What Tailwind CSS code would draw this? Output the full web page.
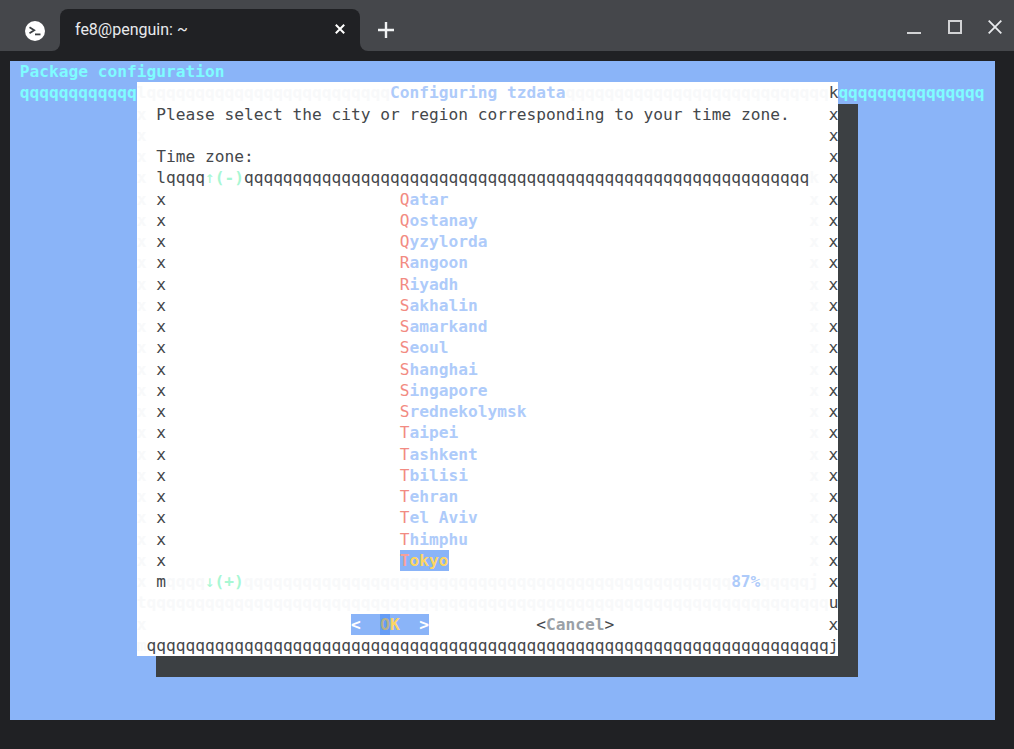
<!doctype html>
<html><head><meta charset="utf-8"><script src="https://cdn.jsdelivr.net/npm/@tailwindcss/browser@4"></script></head>
<body class="m-0 h-[749px] w-[1014px] overflow-hidden bg-[#202124]">
<header class="flex h-[51px] bg-[#202124]">
  <div class="flex h-[51px] w-[60px] items-center rounded-br-lg bg-[#45474b] pl-[25px]">
    <svg width="20" height="20" viewBox="0 0 20 20" class="mt-[10px]"><circle cx="10" cy="10" r="10" fill="#fff"/><path d="M4.5 6.2 9.2 9.2 4.5 12.2" fill="none" stroke="#3c4043" stroke-width="1.8"/><path d="M10 13.4h5.5" stroke="#3c4043" stroke-width="1.8"/></svg>
  </div>
  <div class="flex h-[51px] w-[300px] items-end bg-[#45474b]">
    <div class="flex h-[42px] w-full items-center justify-between rounded-t-lg bg-[#202124] pl-[15px] pr-[15px]">
      <span class="text-[16px] text-[#e8eaed]" style="font-family:Roboto,sans-serif">fe8@penguin: ~</span>
      <svg width="10" height="10" viewBox="0 0 10 10" class="mb-[2px]"><path d="M.8.8l8.4 8.4M9.2.8.8 9.2" stroke="#fff" stroke-width="2"/></svg>
    </div>
  </div>
  <div class="flex h-[51px] flex-1 items-center rounded-bl-lg bg-[#45474b] pt-[8px]">
    <svg width="16" height="16" viewBox="0 0 16 16" class="ml-[18px]"><path d="M8 0v16M0 8h16" stroke="#f1f3f4" stroke-width="2.4"/></svg>
    <svg width="14" height="14" viewBox="0 0 14 14" class="ml-[513px] mb-[6px]"><path d="M0 13h14" stroke="#d2d3d5" stroke-width="2"/></svg>
    <svg width="14" height="14" viewBox="0 0 14 14" class="ml-[27px] mb-[6px]"><rect x="1" y="1" width="12" height="12" fill="none" stroke="#d2d3d5" stroke-width="2"/></svg>
    <svg width="14" height="14" viewBox="0 0 14 14" class="ml-[26px] mb-[6px]"><path d="M.7.7l12.6 12.6M13.3.7.7 13.3" stroke="#e8eaed" stroke-width="1.8"/></svg>
  </div>
</header>
<main class="pl-[10px] pt-[10px]">
<div class="flex h-[659px] w-[985px] flex-col bg-[#8ab4f8] text-[16.2px] leading-[21.26px] whitespace-pre text-[#44474b]" style="font-family:'DejaVu Sans Mono',monospace">
  <div class="h-[21.26px] font-bold text-[#7ffcff]"> Package configuration</div>
  <div class="flex h-[21.26px]">
    <div class="w-[13ch] font-bold text-[#7ffcff]"> qqqqqqqqqqqq</div>
    <div class="flex w-[72ch] bg-white"><b class="text-[#f8f9fa]">lqqqqqqqqqqqqqqqqqqqqqqqqq</b><b class="text-[#aecbfa]">Configuring tzdata</b><b class="text-[#f8f9fa]">qqqqqqqqqqqqqqqqqqqqqqqqqqq</b><span>k</span></div>
    <div class="font-bold text-[#7ffcff]">qqqqqqqqqqqqqqq</div>
  </div>
  <div class="flex h-[21.26px] pl-[13ch]"><div class="flex w-[72ch] bg-white"><b class="w-[2ch] text-[#f8f9fa]">x</b><span class="w-[69ch]">Please select the city or region corresponding to your time zone.</span><span>x</span></div><div class="w-[2ch] bg-[#3c4043]"></div></div>
  <div class="flex h-[21.26px] pl-[13ch]"><div class="flex w-[72ch] bg-white"><b class="w-[2ch] text-[#f8f9fa]">x</b><span class="w-[69ch]"></span><span>x</span></div><div class="w-[2ch] bg-[#3c4043]"></div></div>
  <div class="flex h-[21.26px] pl-[13ch]"><div class="flex w-[72ch] bg-white"><b class="w-[2ch] text-[#f8f9fa]">x</b><span class="w-[69ch]">Time zone:</span><span>x</span></div><div class="w-[2ch] bg-[#3c4043]"></div></div>
  <div class="flex h-[21.26px] pl-[13ch]"><div class="flex w-[72ch] bg-white"><b class="w-[2ch] text-[#f8f9fa]">x</b><span>lqqqq</span><span class="w-[1ch] shrink-0 overflow-hidden text-[#a8f7d4]">↑</span><b class="text-[#a8f7d4]">(-)</b><span class="w-[58ch]">qqqqqqqqqqqqqqqqqqqqqqqqqqqqqqqqqqqqqqqqqqqqqqqqqqqqqqqqqq</span><b class="w-[2ch] text-[#f8f9fa]">k</b><span>x</span></div><div class="w-[2ch] bg-[#3c4043]"></div></div>
  <div class="flex h-[21.26px] pl-[13ch]"><div class="flex w-[72ch] bg-white"><b class="w-[2ch] text-[#f8f9fa]">x</b><span class="w-[25ch]">x</span><span class="w-[42ch]"><span class="text-[#f28b82]">Q</span><b class="text-[#aecbfa]">atar</b></span><b class="w-[2ch] text-[#f8f9fa]">x</b><span>x</span></div><div class="w-[2ch] bg-[#3c4043]"></div></div>
  <div class="flex h-[21.26px] pl-[13ch]"><div class="flex w-[72ch] bg-white"><b class="w-[2ch] text-[#f8f9fa]">x</b><span class="w-[25ch]">x</span><span class="w-[42ch]"><span class="text-[#f28b82]">Q</span><b class="text-[#aecbfa]">ostanay</b></span><b class="w-[2ch] text-[#f8f9fa]">x</b><span>x</span></div><div class="w-[2ch] bg-[#3c4043]"></div></div>
  <div class="flex h-[21.26px] pl-[13ch]"><div class="flex w-[72ch] bg-white"><b class="w-[2ch] text-[#f8f9fa]">x</b><span class="w-[25ch]">x</span><span class="w-[42ch]"><span class="text-[#f28b82]">Q</span><b class="text-[#aecbfa]">yzylorda</b></span><b class="w-[2ch] text-[#f8f9fa]">x</b><span>x</span></div><div class="w-[2ch] bg-[#3c4043]"></div></div>
  <div class="flex h-[21.26px] pl-[13ch]"><div class="flex w-[72ch] bg-white"><b class="w-[2ch] text-[#f8f9fa]">x</b><span class="w-[25ch]">x</span><span class="w-[42ch]"><span class="text-[#f28b82]">R</span><b class="text-[#aecbfa]">angoon</b></span><b class="w-[2ch] text-[#f8f9fa]">x</b><span>x</span></div><div class="w-[2ch] bg-[#3c4043]"></div></div>
  <div class="flex h-[21.26px] pl-[13ch]"><div class="flex w-[72ch] bg-white"><b class="w-[2ch] text-[#f8f9fa]">x</b><span class="w-[25ch]">x</span><span class="w-[42ch]"><span class="text-[#f28b82]">R</span><b class="text-[#aecbfa]">iyadh</b></span><b class="w-[2ch] text-[#f8f9fa]">x</b><span>x</span></div><div class="w-[2ch] bg-[#3c4043]"></div></div>
  <div class="flex h-[21.26px] pl-[13ch]"><div class="flex w-[72ch] bg-white"><b class="w-[2ch] text-[#f8f9fa]">x</b><span class="w-[25ch]">x</span><span class="w-[42ch]"><span class="text-[#f28b82]">S</span><b class="text-[#aecbfa]">akhalin</b></span><b class="w-[2ch] text-[#f8f9fa]">x</b><span>x</span></div><div class="w-[2ch] bg-[#3c4043]"></div></div>
  <div class="flex h-[21.26px] pl-[13ch]"><div class="flex w-[72ch] bg-white"><b class="w-[2ch] text-[#f8f9fa]">x</b><span class="w-[25ch]">x</span><span class="w-[42ch]"><span class="text-[#f28b82]">S</span><b class="text-[#aecbfa]">amarkand</b></span><b class="w-[2ch] text-[#f8f9fa]">x</b><span>x</span></div><div class="w-[2ch] bg-[#3c4043]"></div></div>
  <div class="flex h-[21.26px] pl-[13ch]"><div class="flex w-[72ch] bg-white"><b class="w-[2ch] text-[#f8f9fa]">x</b><span class="w-[25ch]">x</span><span class="w-[42ch]"><span class="text-[#f28b82]">S</span><b class="text-[#aecbfa]">eoul</b></span><b class="w-[2ch] text-[#f8f9fa]">x</b><span>x</span></div><div class="w-[2ch] bg-[#3c4043]"></div></div>
  <div class="flex h-[21.26px] pl-[13ch]"><div class="flex w-[72ch] bg-white"><b class="w-[2ch] text-[#f8f9fa]">x</b><span class="w-[25ch]">x</span><span class="w-[42ch]"><span class="text-[#f28b82]">S</span><b class="text-[#aecbfa]">hanghai</b></span><b class="w-[2ch] text-[#f8f9fa]">x</b><span>x</span></div><div class="w-[2ch] bg-[#3c4043]"></div></div>
  <div class="flex h-[21.26px] pl-[13ch]"><div class="flex w-[72ch] bg-white"><b class="w-[2ch] text-[#f8f9fa]">x</b><span class="w-[25ch]">x</span><span class="w-[42ch]"><span class="text-[#f28b82]">S</span><b class="text-[#aecbfa]">ingapore</b></span><b class="w-[2ch] text-[#f8f9fa]">x</b><span>x</span></div><div class="w-[2ch] bg-[#3c4043]"></div></div>
  <div class="flex h-[21.26px] pl-[13ch]"><div class="flex w-[72ch] bg-white"><b class="w-[2ch] text-[#f8f9fa]">x</b><span class="w-[25ch]">x</span><span class="w-[42ch]"><span class="text-[#f28b82]">S</span><b class="text-[#aecbfa]">rednekolymsk</b></span><b class="w-[2ch] text-[#f8f9fa]">x</b><span>x</span></div><div class="w-[2ch] bg-[#3c4043]"></div></div>
  <div class="flex h-[21.26px] pl-[13ch]"><div class="flex w-[72ch] bg-white"><b class="w-[2ch] text-[#f8f9fa]">x</b><span class="w-[25ch]">x</span><span class="w-[42ch]"><span class="text-[#f28b82]">T</span><b class="text-[#aecbfa]">aipei</b></span><b class="w-[2ch] text-[#f8f9fa]">x</b><span>x</span></div><div class="w-[2ch] bg-[#3c4043]"></div></div>
  <div class="flex h-[21.26px] pl-[13ch]"><div class="flex w-[72ch] bg-white"><b class="w-[2ch] text-[#f8f9fa]">x</b><span class="w-[25ch]">x</span><span class="w-[42ch]"><span class="text-[#f28b82]">T</span><b class="text-[#aecbfa]">ashkent</b></span><b class="w-[2ch] text-[#f8f9fa]">x</b><span>x</span></div><div class="w-[2ch] bg-[#3c4043]"></div></div>
  <div class="flex h-[21.26px] pl-[13ch]"><div class="flex w-[72ch] bg-white"><b class="w-[2ch] text-[#f8f9fa]">x</b><span class="w-[25ch]">x</span><span class="w-[42ch]"><span class="text-[#f28b82]">T</span><b class="text-[#aecbfa]">bilisi</b></span><b class="w-[2ch] text-[#f8f9fa]">x</b><span>x</span></div><div class="w-[2ch] bg-[#3c4043]"></div></div>
  <div class="flex h-[21.26px] pl-[13ch]"><div class="flex w-[72ch] bg-white"><b class="w-[2ch] text-[#f8f9fa]">x</b><span class="w-[25ch]">x</span><span class="w-[42ch]"><span class="text-[#f28b82]">T</span><b class="text-[#aecbfa]">ehran</b></span><b class="w-[2ch] text-[#f8f9fa]">x</b><span>x</span></div><div class="w-[2ch] bg-[#3c4043]"></div></div>
  <div class="flex h-[21.26px] pl-[13ch]"><div class="flex w-[72ch] bg-white"><b class="w-[2ch] text-[#f8f9fa]">x</b><span class="w-[25ch]">x</span><span class="w-[42ch]"><span class="text-[#f28b82]">T</span><b class="text-[#aecbfa]">el Aviv</b></span><b class="w-[2ch] text-[#f8f9fa]">x</b><span>x</span></div><div class="w-[2ch] bg-[#3c4043]"></div></div>
  <div class="flex h-[21.26px] pl-[13ch]"><div class="flex w-[72ch] bg-white"><b class="w-[2ch] text-[#f8f9fa]">x</b><span class="w-[25ch]">x</span><span class="w-[42ch]"><span class="text-[#f28b82]">T</span><b class="text-[#aecbfa]">himphu</b></span><b class="w-[2ch] text-[#f8f9fa]">x</b><span>x</span></div><div class="w-[2ch] bg-[#3c4043]"></div></div>
  <div class="flex h-[21.26px] pl-[13ch]"><div class="flex w-[72ch] bg-white"><b class="w-[2ch] text-[#f8f9fa]">x</b><span class="w-[25ch]">x</span><span class="w-[42ch]"><span class="inline-block h-[21.26px] bg-[#8ab4f8] align-top font-bold"><span class="text-[#f6a09a]">T</span><span class="text-[#fdd663]">okyo</span></span></span><b class="w-[2ch] text-[#f8f9fa]">x</b><span>x</span></div><div class="w-[2ch] bg-[#3c4043]"></div></div>
  <div class="flex h-[21.26px] pl-[13ch]"><div class="flex w-[72ch] bg-white"><b class="w-[2ch] shrink-0 text-[#f8f9fa]">x</b><span class="w-[1ch] shrink-0">m</span><b class="w-[4ch] shrink-0 text-[#f8f9fa]">qqqq</b><span class="w-[1ch] shrink-0 overflow-hidden text-[#a8f7d4]">↓</span><b class="w-[3ch] shrink-0 text-[#a8f7d4]">(+)</b><b class="w-[50ch] shrink-0 text-[#f8f9fa]">qqqqqqqqqqqqqqqqqqqqqqqqqqqqqqqqqqqqqqqqqqqqqqqqqq</b><b class="w-[3ch] shrink-0 text-[#aecbfa]">87%</b><b class="w-[7ch] shrink-0 text-[#f8f9fa]">qqqqqj</b><span class="w-[1ch] shrink-0">x</span></div><div class="w-[2ch] bg-[#3c4043]"></div></div>
  <div class="flex h-[21.26px] pl-[13ch]"><div class="flex w-[72ch] bg-white"><b class="w-[71ch] text-[#f8f9fa]">tqqqqqqqqqqqqqqqqqqqqqqqqqqqqqqqqqqqqqqqqqqqqqqqqqqqqqqqqqqqqqqqqqqqqqq</b><span>u</span></div><div class="w-[2ch] bg-[#3c4043]"></div></div>
  <div class="flex h-[21.26px] pl-[13ch]"><div class="flex w-[72ch] bg-white"><b class="w-[22ch] text-[#f8f9fa]">x</b><b class="flex h-[21.26px] w-[8ch] bg-[#8ab4f8] text-white"><span class="w-[3ch]">&lt;</span><span class="bg-[#669df6] text-[#b5b18c]">O</span><span class="w-[3ch] text-[#fdd663]">K</span>&gt;</b><span class="ml-[11ch]">&lt;</span><b class="text-[#9aa0a6]">Cancel</b><span class="w-[23ch]">&gt;</span><span>x</span></div><div class="w-[2ch] bg-[#3c4043]"></div></div>
  <div class="flex h-[21.26px] pl-[13ch]"><div class="flex w-[72ch] bg-white"><b class="text-[#f8f9fa]">m</b><span>qqqqqqqqqqqqqqqqqqqqqqqqqqqqqqqqqqqqqqqqqqqqqqqqqqqqqqqqqqqqqqqqqqqqqqj</span></div><div class="w-[2ch] bg-[#3c4043]"></div></div>
  <div class="ml-[15ch] h-[21.26px] w-[72ch] shrink-0 bg-[#3c4043]"></div>
</div>
</main>
</body></html>
